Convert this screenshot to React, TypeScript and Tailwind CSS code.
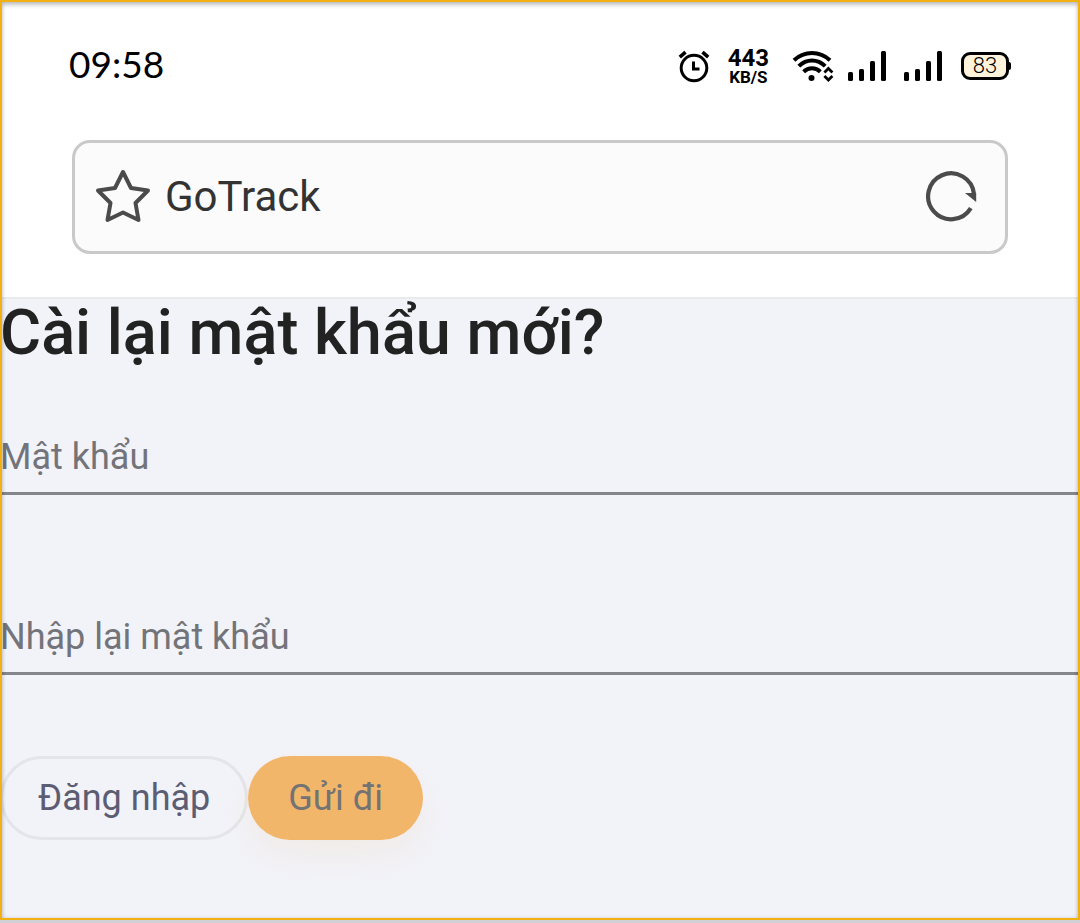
import React from 'react';

function AlarmIcon() {
  return (
    <svg width="32" height="34" viewBox="0 0 32 34" fill="none" stroke="#000" strokeWidth="3" aria-hidden="true">
      <circle cx="16" cy="19" r="12.8" />
      <path d="M15.5 12.5v7.5h6" />
      <path d="M1.8 8.2 7.5 3.2M30.2 8.2 24.5 3.2" strokeWidth="3.6" />
    </svg>
  );
}

function WifiIcon() {
  return (
    <svg width="42" height="34" viewBox="0 0 42 34" fill="none" stroke="#000" strokeWidth="4" aria-hidden="true">
      <path d="M2 11.2C12.500 1.600 27.500 1.600 38 11.200" />
      <path d="M6.800 17.200C14.500 9.600 25.500 9.600 33.200 17.200" />
      <path d="M11.600 22.800C16.500 18 23.500 18 28.400 22.800" />
      <circle cx="19.500" cy="29" r="3" fill="#000" stroke="none" />
      <path d="m32.400 23.500 4-4 4 4M32.400 27l4 4 4-4" strokeWidth="2.800" />
    </svg>
  );
}

function SignalIcon() {
  return (
    <svg width="38" height="30" viewBox="0 0 38 30" aria-hidden="true">
      <rect x="0" y="21" width="5" height="9" rx="1.500" />
      <rect x="11" y="18" width="5" height="12" rx="1.500" />
      <rect x="22" y="10" width="5" height="20" rx="1.500" />
      <rect x="33" y="0" width="5" height="30" rx="1.500" />
    </svg>
  );
}

function StatusBar() {
  return (
    <div className="flex h-12 items-center justify-between pr-[69px] pl-[69px]">
      <span className="pb-1 font-[Lato,sans-serif] text-[37px] leading-11 text-black">09:58</span>
      <div className="flex items-center">
        <AlarmIcon />
        <div className="ml-[18px] flex flex-col items-center font-bold text-black">
          <span className="text-2xl leading-[22px]">443</span>
          <span className="text-[17px] leading-4">KB/S</span>
        </div>
        <div className="ml-[23px]">
          <WifiIcon />
        </div>
        <div className="ml-[14px] flex gap-[18px]">
          <SignalIcon />
          <SignalIcon />
        </div>
        <div className="ml-[19px] flex items-center">
          <span className="flex h-7 w-12 items-center justify-center rounded-[9px] border-3 border-black bg-[#fff3dc] text-[22px] leading-6 font-light text-black">
            83
          </span>
          <span className="h-2 w-[2px] rounded-r-sm bg-black" />
        </div>
      </div>
    </div>
  );
}

function AddressBar() {
  return (
    <div className="mx-[72px] mt-[50px] flex h-[114px] items-center rounded-[18px] border-3 border-[#c9c9c9] bg-[#fbfbfb] pr-[28px] pl-[20px]">
      <button type="button" aria-label="Bookmark" className="shrink-0">
        <svg width="56" height="56" viewBox="0 0 56 56" fill="none" stroke="#4b4b4b" strokeWidth="4" strokeLinejoin="round" aria-hidden="true">
          <path d="M28 3 36 19 53 21.500 40.500 34 43.500 51 28 43.500 12.500 51 15.500 34 3 21.500 20 19Z" />
        </svg>
      </button>
      <input
        type="text"
        aria-label="Address"
        defaultValue="GoTrack"
        className="ml-[14px] min-w-0 flex-1 bg-transparent text-[42px] leading-12 text-[#333333] outline-none"
      />
      <button type="button" aria-label="Reload" className="shrink-0">
        <svg width="52" height="52" viewBox="0 0 52 52" fill="none" aria-hidden="true">
          <path d="M45.800 37.200A23 23 0 1 1 49 23" stroke="#4b4b4b" strokeWidth="4.200" />
          <path d="M40 22h11.200v9Z" fill="#4b4b4b" />
        </svg>
      </button>
    </div>
  );
}

function PasswordField({ label, id }: { label: string; id: string }) {
  return (
    <input
      id={id}
      type="password"
      aria-label={label}
      placeholder={label}
      className="block h-20 w-full border-b-3 border-[#85868c] bg-transparent pt-[6px] text-4xl text-[#333333] outline-none placeholder:text-[#737479] placeholder:opacity-100"
    />
  );
}

export default function App() {
  return (
    <div className="relative flex min-h-screen flex-col bg-[#d0d0d5] pb-[3px] font-[Roboto,sans-serif]">
      <div className="flex flex-1 flex-col bg-[#f2f3f9]">
        <header className="border-b-2 border-[#e8eaec] bg-white pt-[42px] pb-[43px]">
          <StatusBar />
          <AddressBar />
        </header>
        <main>
          <h1 className="text-[63px] leading-[68px] font-medium text-[#222222]">Cài lại mật khẩu mới?</h1>
          <form className="mt-12" onSubmit={(event) => event.preventDefault()}>
            <div className="flex flex-col gap-[100px]">
              <PasswordField id="password" label="Mật khẩu" />
              <PasswordField id="confirm-password" label="Nhập lại mật khẩu" />
            </div>
            <div className="mt-[81px] flex">
              <button type="button" className="h-[84px] rounded-full border-3 border-[#e4e5ea] px-[35px] text-4xl text-[#5c5d72]">
                Đăng nhập
              </button>
              <button
                type="submit"
                className="h-[84px] rounded-full bg-[#f2b66b] px-10 text-4xl text-[#737373] shadow-[0_16px_36px_rgba(242,182,107,0.12)]"
              >
                Gửi đi
              </button>
            </div>
          </form>
        </main>
      </div>
      <div className="pointer-events-none absolute inset-x-0 top-0 bottom-[3px] border-2 border-[#f2b013] shadow-[inset_0_3px_4px_rgba(0,0,0,0.22),inset_0_0_4px_rgba(0,0,0,0.12)]" />
    </div>
  );
}
